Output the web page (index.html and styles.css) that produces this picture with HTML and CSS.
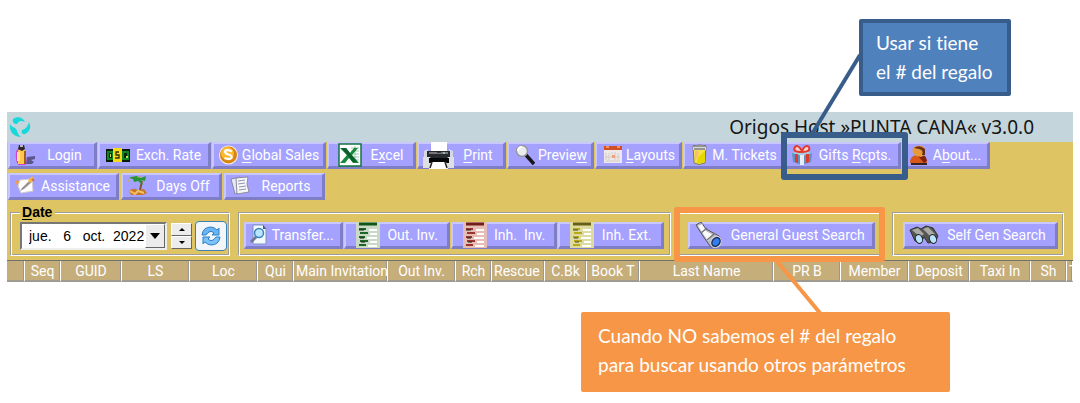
FILE: index.html
```html
<!DOCTYPE html>
<html lang="es">
<head>
<meta charset="utf-8">
<title>Origos Host</title>
<link rel="stylesheet" href="styles.css">
</head>
<body>
<main class="stage">
<section class="window">
<header class="titlebar">
<svg class="logo" width="24" height="24" viewBox="0 0 24 24" fill="#18d8dc"><path d="M5 4c4-3 10-2 12 3-4-2-6-1-8 2-3 0-5-2-4-5z"/><path d="M21 7c3 6 0 10-4 12-3 1-4-2-3-4 4-1 6-4 7-8z"/><path d="M2 9c2 4 5 3 6 5 2 3 2 6 5 8-7 0-12-5-11-13z"/></svg>
<h1 class="title">Origos Host »PUNTA CANA« v3.0.0</h1>
</header>

<nav class="toolbar">
<button class="btn w-login"><svg width="22" height="22" viewBox="0 0 22 22"><path d="M13 13l8-1v3l-4 1 3 2-2 2h-6z" fill="#5d568a"/><path d="M4 5Q1 7 2 14q0 5 3 7h6q2-2 1-8 0-6-3-9z" fill="#d63bd2"/><path d="M4 6h7v14H4z" fill="#ffc84c"/><path d="M3 8h3v9H3z" fill="#ffe48b"/><path d="M10 7h2v13h-2z" fill="#a85b19"/><path d="M5 1h5l1 4-3 2-4-2z" fill="#28282d"/><path d="M6 1h3v2H6z" fill="#bbb"/></svg><span class="label">Login</span></button>
<button class="btn w-rate"><svg width="24" height="22" viewBox="0 0 24 22"><path d="M0 5h24v13H0z" fill="#081c08"/><path d="M1 7h22v9H1z" fill="#108522"/><path d="M3 9h3v5H3zM18 9h3v5h-3z" fill="#06280b"/><path d="M4 10h1v3H4zM20 12h2v2h-2z" fill="#d5db50"/><path d="M7 4h9v14H7z" fill="#f7dc18"/><path d="M13 8h-3v3h3v3H9" fill="none" stroke="#332d08" stroke-width="1.3"/></svg><span class="label">Exch. Rate</span></button>
<button class="btn w-sales"><svg width="21" height="22" viewBox="0 0 21 22"><circle cx="10.5" cy="11" r="9.5" fill="#f6f1df"/><circle cx="10.5" cy="11" r="8.5" fill="#d98513"/><circle cx="9.5" cy="9.5" r="6.5" fill="#ffb92c"/><path d="M14 7.500q-6-3-7 0 0 2 3.500 3 4 1 3 3.500-2 2-7 0" fill="none" stroke="#fff" stroke-width="2.300"/></svg><span class="label"><u>G</u>lobal Sales</span></button>
<button class="btn w-excel"><svg width="24" height="24" viewBox="0 0 24 24"><path d="M1 1h22v22H1z" fill="#fff" stroke="#127640" stroke-width="1.500"/><path d="M13 5h8M13 8h8M13 11h8M13 14h8M13 17h8M17 3v17" stroke="#9dc6aa"/><path d="M2 5h6l4 5 4-5h4l-6 7 7 8h-6l-4-5-4 5H2l7-8z" fill="#16873d"/><path d="M3 5h5l11 14h-4z" fill="#0a602b"/></svg><span class="label">E<u>x</u>cel</span></button>
<button class="btn w-print"><svg width="31" height="27" viewBox="0 0 31 27"><path d="M8 0h16v11H8z" fill="#fff"/><path d="M1 9l4-2v9H1zM26 7l4 2v7h-4z" fill="#d5d7e2"/><path d="M4 9h23v8H4z" fill="#27292d"/><path d="M6 10h19v2H6z" fill="#777"/><path d="M0 15h7l2 3h14l2-3h6v11H0z" fill="#dedfe3"/><path d="M6 16h20v5H6z" fill="#060708"/><path d="M8 20h15l2 7H6z" fill="#fff"/><path d="M7 26l2-6M24 26l-2-6M14 10h4" stroke="#222" stroke-width="1.500"/><path d="M20 11h2" stroke="#b7f0ff"/></svg><span class="label"><u>P</u>rint</span></button>
<button class="btn w-preview"><svg width="20" height="22" viewBox="0 0 20 22"><path d="M11 11l8 9" stroke="#17171b" stroke-width="3.500"/><circle cx="7" cy="7" r="5.500" fill="#e9edf0" stroke="#96979a" stroke-width="1.500"/><path d="M3 7q0-4 4-4" stroke="#fff" stroke-width="2" fill="none"/></svg><span class="label">Previe<u>w</u></span></button>
<button class="btn w-preview"><svg width="20" height="22" viewBox="0 0 20 22"><path d="M1 2h18v17H1z" fill="#eee9e8"/><path d="M1 2h18v4H1z" fill="#d34d25"/><path d="M3 3h3M14 3h3" stroke="#ffe0a0"/><path d="M3 9v7M6 9v7M9 8v3M12 8v8M15 9v7M2 13h15M3 17h14" stroke="#d5ccc9"/><path d="M9 11h3v3H9z" fill="#f2a077"/></svg><span class="label"><u>L</u>ayouts</span></button>
<button class="btn w-tickets"><svg width="18" height="22" viewBox="0 0 18 22"><path d="M2 2q7-2 13 0l-1 17q-6 3-11 0z" fill="#f4e24b" stroke="#79775c"/><path d="M2 2q7-2 13 0v4H2z" fill="#d5d8d6"/><path d="M2 2h13M3 5h11" stroke="#555"/><path d="M4 7q5-2 3 5l-3 6z" fill="#f8bd76"/><path d="M7 13l7-6v11q-4 2-8 1z" fill="#e5d700"/></svg><span class="label">M. Tickets</span></button>
<button class="btn w-gifts"><svg width="22" height="22" viewBox="0 0 22 22"><path d="M1 9l10-3 10 3-1 9-9 3-9-3z" fill="#5f91c1"/><path d="M1 9l10-3 10 3-10 3z" fill="#a9cce6"/><path d="M9 11h4v10H9z" fill="#e8edf4"/><path d="M4 10h3v9l-3-1zM15 10h3v8l-3 1z" fill="#df3a2c"/><path d="M10 8Q1 8 4 3q3-3 7 4 3-7 7-4 2 5-7 5z" fill="#f6d4d0" stroke="#e33b2c" stroke-width="2"/></svg><span class="label">Gifts <u>R</u>cpts.</span></button>
<button class="btn w-about"><svg width="18" height="22" viewBox="0 0 18 22"><path d="M0 19q0-7 6-8h6q5 1 5 9z" fill="#d85719"/><path d="M8 12l6 7 3-2q-1-6-5-6z" fill="#80230e"/><path d="M3 9Q1 4 6 2q7-2 9 3v6l-4 2-5-1z" fill="#e69a38"/><path d="M4 4q5-4 11 1v6h-3q2-5-3-6z" fill="#653112"/><path d="M1 20h16" stroke="#342226" stroke-width="2"/></svg><span class="label">A<u>b</u>out...</span></button>
</nav>

<nav class="toolbar second">
<button class="btn w-assist"><svg width="22" height="22" viewBox="0 0 22 22"><path d="M1 5l8 2-5 7z" fill="#ed9b52"/><path d="M6 5l12-1 1 12-12 2-3-7z" fill="#fff" stroke="#d5cbd2"/><path d="M8 13l8-8 2 2-8 7-4 2z" fill="#9b918d"/><path d="M14 6l4-5 2 3-4 4z" fill="#f6b742"/><path d="M18 4l2 2" stroke="#d36b31" stroke-width="2"/></svg><span class="label">Assistance</span></button>
<button class="btn w-days"><svg width="21" height="22" viewBox="0 0 21 22"><path d="M2 16q4-4 9-1l6-1 3 4-4 2H4z" fill="#c77730"/><path d="M3 16l5 3 3-3 6 2" stroke="#f4c25e" stroke-width="2" fill="none"/><path d="M15 6l-2 9" stroke="#81582c" stroke-width="2"/><path d="M4 2l6-1 4 2 5-2-1 5-4-1 2 5-5-4-4 1-1-3-4-1z" fill="#269334"/><path d="M3 3l-2 4M10 2h5" stroke="#b9b443"/></svg><span class="label">Days Off</span></button>
<button class="btn w-days"><svg width="21" height="22" viewBox="0 0 21 22"><path d="M1 4l9-2 4 14-9 3z" fill="#e8e9f0" stroke="#8784a8"/><path d="M6 3l12-1-1 7 2 8-12 2z" fill="#f7f7fa" stroke="#8b899d"/><path d="M8 6l7-1M8 9l7-1M9 12l7-1M9 15l7-1" stroke="#8c94b0"/></svg><span class="label">Reports</span></button>
</nav>

<div class="groups">
<fieldset class="group date">
<legend><label for="day"><u>D</u>ate</label></legend>
<div class="datebox"><input id="day" type="text" size="8" value="jue.   6   oct.  2022"><button class="drop" aria-label="Calendar"><svg width="10" height="6" viewBox="0 0 10 6"><path d="M0 0h10L5 6z"/></svg></button></div>
<div class="spin"><button aria-label="Next day"><svg width="6" height="3" viewBox="0 0 6 3"><path d="M0 3l3-3 3 3z"/></svg></button><button aria-label="Previous day"><svg width="6" height="3" viewBox="0 0 6 3"><path d="M0 0h6L3 3z"/></svg></button></div>
<button class="refresh" aria-label="Refresh"><svg width="22" height="22" viewBox="0 0 22 22"><path d="M2 10q1-8 9-8 3 0 6 3l2-2v7h-7l2-2q-4-4-8 2z" fill="#6ab4f0" stroke="#2b80cc"/><path d="M20 12q-1 8-9 8-3 0-6-3l-2 2v-7h7l-2 2q4 4 8-2z" fill="#7cc2f6" stroke="#2b80cc"/></svg></button>
</fieldset>

<section class="group lists">
<button class="btn w-transfer"><svg width="17" height="22" viewBox="0 0 17 22"><path d="M3 1h10l3 4v15H3z" fill="#f4f9ff" stroke="#7895b8"/><path d="M13 1v4h3" fill="#385984"/><path d="M1 18l5-5" stroke="#6d7894" stroke-width="3"/><circle cx="9" cy="9" r="4.500" fill="#b9e6ff" stroke="#3d83bc" stroke-width="1.500"/></svg><span class="label">Transfer...</span></button>
<button class="btn sheet"><svg width="24" height="26" viewBox="0 0 24 26"><path d="M0 0h24v26H0z" fill="#cad9c5"/><path d="M3 2h18" stroke="#10551a" stroke-width="3"/><path d="M3 7h7M4 11h8M3 15h6M4 19h8M3 23h7" stroke="#1c6728" stroke-width="2"/><path d="M3 8h5M4 16h4M5 20h4" stroke="#222"/><path d="M13 8h8M14 12h7M11 16h10M14 20h7M12 24h9" stroke="#fff" stroke-width="2"/></svg><span class="label">Out. Inv.</span></button>
<button class="btn sheet"><svg width="24" height="26" viewBox="0 0 24 26"><path d="M0 0h24v26H0z" fill="#e5bdb5"/><path d="M3 2h18" stroke="#721d18" stroke-width="3"/><path d="M3 7h7M4 11h8M3 15h6M4 19h8M3 23h7" stroke="#9a342e" stroke-width="2"/><path d="M3 8h5M4 16h4M5 20h4" stroke="#222"/><path d="M13 8h8M14 12h7M11 16h10M14 20h7M12 24h9" stroke="#fff" stroke-width="2"/></svg><span class="label">Inh.&nbsp; Inv.</span></button>
<button class="btn sheet"><svg width="24" height="26" viewBox="0 0 24 26"><path d="M0 0h24v26H0z" fill="#dedba0"/><path d="M3 2h18" stroke="#675e14" stroke-width="3"/><path d="M3 7h7M4 11h8M3 15h6M4 19h8M3 23h7" stroke="#b8a916" stroke-width="2"/><path d="M3 8h5M4 16h4M5 20h4" stroke="#444"/><path d="M13 8h8M14 12h7M11 16h10M14 20h7M12 24h9" stroke="#fff" stroke-width="2"/></svg><span class="label">Inh. Ext.</span></button>
</section>

<section class="group guest">
<button class="btn"><svg width="30" height="26" viewBox="0 0 30 26"><path d="M2 3l5-3 5 7 13 7q4 4 1 9-5 5-10 1L9 14z" fill="#b7b8bf" stroke="#55565d"/><path d="M4 4l4-2 4 7 7 4-5 6z" fill="#fafafa"/><path d="M7 11l6-5M13 18l8-7" stroke="#74757d" stroke-width="1.500"/><ellipse cx="22" cy="20" rx="5" ry="6" transform="rotate(35 22 20)" fill="#202f69" stroke="#ddd"/><ellipse cx="22" cy="20" rx="3" ry="4" transform="rotate(35 22 20)" fill="#327eea"/></svg><span class="label">General Guest Search</span></button>
</section>

<section class="group self">
<button class="btn"><svg width="30" height="22" viewBox="0 0 30 22"><path d="M1 6l7-3 4 2 5-3 7 2 5 8-3 6-7 1-4-6-3 5-6-1z" fill="#555653" stroke="#30312f"/><path d="M3 6l6-2 6 6-4 3zM14 5l5-2 7 7-5 2z" fill="#aaa9a4"/><ellipse cx="10" cy="15" rx="3.500" ry="4.500" transform="rotate(-20 10 15)" fill="#b8e3ff" stroke="#222"/><ellipse cx="24" cy="15" rx="3.500" ry="4.500" transform="rotate(-20 24 15)" fill="#b8e3ff" stroke="#222"/></svg><span class="label">Self Gen Search</span></button>
</section>
</div>

<table class="grid">
<colgroup><col class="c17"><col class="c36"><col class="c61"><col class="c68"><col class="c68"><col class="c36"><col class="c94"><col class="c68"><col class="c36"><col class="c53"><col class="c42"><col class="c53"><col class="c134"><col class="c67"><col class="c68"><col class="c61"><col class="c61"><col class="c36"><col></colgroup>
<thead><tr><th></th><th>Seq</th><th>GUID</th><th>LS</th><th>Loc</th><th>Qui</th><th class="cut">Main Invitation</th><th>Out Inv.</th><th>Rch</th><th class="cut">Rescue</th><th>C.Bk</th><th>Book T</th><th>Last Name</th><th>PR B</th><th>Member</th><th>Deposit</th><th>Taxi In</th><th>Sh</th><th class="cut">T</th></tr></thead>
</table>
</section>

<svg class="pointers" width="1080" height="403" viewBox="0 0 1080 403" fill="none"><path d="M860 55L812 134" stroke="#385d8a" stroke-width="4"/><path d="M776 260L820 313" stroke="#f79646" stroke-width="4"/></svg>
<div class="frame gifts-frame"></div>
<div class="frame guest-frame"></div>
<p class="callout blue">Usar si tiene<br>el # del regalo</p>
<p class="callout orange">Cuando NO sabemos el # del regalo<br>para buscar usando otros parámetros</p>
</main>
</body>
</html>
```
FILE: styles.css
```css
* { box-sizing: border-box; }
body { margin: 0; background: #fff; font-family: Roboto, "Liberation Sans", sans-serif; font-size: 14px; }
svg { display: block; flex: none; }
button { font: inherit; margin: 0; padding: 0; }
u { text-underline-offset: 2px; }

.stage { position: relative; padding: 112px 7px 120px; overflow: hidden; }
.window { background: #dec463; overflow: hidden; }

.titlebar { display: flex; align-items: center; justify-content: space-between; height: 30px; padding: 0 39px 0 1px; background: #c4d6db; }
.title { margin: 0; font: 400 19px/30px "Noto Sans", sans-serif; color: #151515; white-space: nowrap; }

.toolbar { display: flex; gap: 1px; padding-left: 1px; }
.second { gap: 2px; padding-top: 4px; }

.btn { display: flex; align-items: center; flex: none; height: 27px; padding: 0 1px 0 4px; color: #fff; background: #a5a2ff; border: 3px solid; border-color: #c8c8fc #7f7dc6 #7f7dc6 #c8c8fc; border-width: 2px 3px 3px 2px; white-space: nowrap; }
.btn svg { margin: -2px 0; }
.label { flex: 1; text-align: center; }
.w-login { width: 89px; }
.w-rate { width: 113px; padding-left: 6px; }
.w-sales { width: 114px; }
.w-excel { width: 89px; padding-left: 9px; }
.w-print { width: 89px; }
.w-preview { width: 87px; padding-left: 6px; }
.w-tickets { width: 101px; padding-left: 6px; }
.w-gifts { width: 116px; }
.w-about { width: 88px; padding-left: 6px; }
.w-assist { width: 111px; }
.w-days { width: 101px; }
.w-transfer { width: 99px; }
.sheet { width: 106px; padding-left: 10px; }

.groups { display: flex; justify-content: space-between; padding: 12px 9px 4px 3px; }
.group { display: flex; flex: none; align-items: center; min-width: 0; height: 44px; margin: 0; padding: 3px 5px 0; border: 1px solid; border-color: #9c9c98 #fff #fff #9c9c98; box-shadow: inset 1px 1px #fff, inset -1px -1px #9c9c98; }
.lists { width: 433px; gap: 1px; }
.guest { width: 206px; padding-left: 9px; }
.guest .btn { width: 187px; }
.self { width: 172px; padding-left: 10px; }
.self .btn { width: 155px; }

.date { position: relative; width: 220px; padding: 3px 2px 0 9px; }
.date legend { position: absolute; top: -9px; left: 9px; padding: 0 3px 0 2px; background: #dec463; font: bold 14px/16px "Liberation Sans", sans-serif; }
.datebox { display: flex; flex: 1; min-width: 0; height: 28px; border: 2px solid; border-color: #777 #eee #eee #777; background: #fff; }
.datebox input { flex: 1; min-width: 0; padding: 0 0 0 7px; border: 0; background: none; font: 14px "Liberation Sans", sans-serif; }
.drop { width: 20px; }
.drop, .spin button { display: flex; flex: none; align-items: center; justify-content: center; background: #ececec; border: 1px solid; border-color: #fff #666 #666 #fff; }
.spin { display: flex; flex: none; flex-direction: column; width: 21px; margin: 0 3px 0 4px; }
.spin button { height: 13px; }
.refresh { display: flex; flex: none; align-items: center; justify-content: center; width: 32px; height: 30px; background: #f2f6fa; border: 1px solid #3c7fb1; border-radius: 4px; }

.grid { width: 100%; table-layout: fixed; border-collapse: separate; border-spacing: 0; border-top: 1px solid #70706c; }
.grid th { height: 21px; padding: 0; overflow: hidden; background: #c6ae7b; color: #fff; font-weight: 400; line-height: 18px; text-align: center; white-space: nowrap; border-right: 1px solid #fff; border-bottom: 2px solid #a09b90; box-shadow: inset -1px 0 #989898; }
.grid .cut { text-align: left; padding-left: 2px; }
.c17 { width: 18px; }
.c36 { width: 36px; }
.c42 { width: 42px; }
.c53 { width: 53px; }
.c61 { width: 61px; }
.c67 { width: 67px; }
.c68 { width: 68px; }
.c94 { width: 94px; }
.c134 { width: 134px; }

.pointers { position: absolute; top: 0; left: 0; }
.frame { position: absolute; border: 6px solid; border-radius: 3px; }
.gifts-frame { left: 781px; top: 132px; width: 127px; height: 48px; border-color: #385d8a; }
.guest-frame { left: 674px; top: 207px; width: 211px; height: 55px; border-color: #f79646; }
.callout { position: absolute; margin: 0; color: #fff; font: 19px/29px Lato, sans-serif; font-variant-ligatures: none; white-space: nowrap; border-radius: 2px; }
.blue { left: 859px; top: 19px; width: 152px; height: 77px; padding: 5px 13px; background: #4f81bd; border: 4px solid #385d8a; }
.orange { left: 581px; top: 312px; width: 369px; height: 80px; padding: 9px 17px; background: #f79646; }
```
